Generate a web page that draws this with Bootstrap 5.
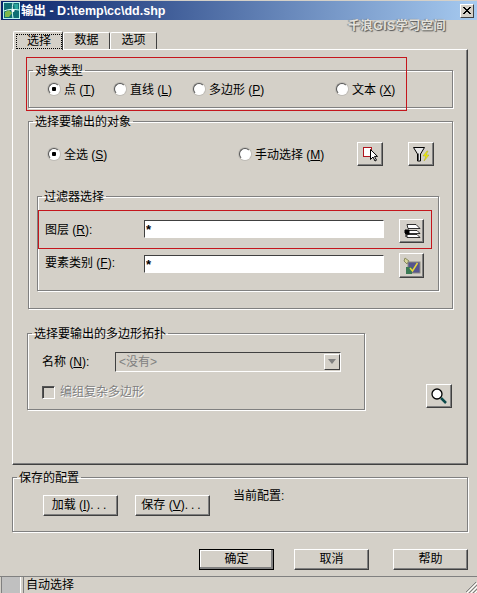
<!DOCTYPE html>
<html lang="zh-CN">

<head>
    <meta charset="UTF-8">
    <meta name="viewport" content="width=device-width, initial-scale=1.0">
    <title>输出</title>
    <link href="https://cdn.jsdelivr.net/npm/bootstrap@5.3.0/dist/css/bootstrap.min.css" rel="stylesheet">
    <style>
        body {
            margin: 0;
            background: #d4d0c8;
            color: #000;
            font-family: "Liberation Sans", "Noto Sans CJK SC", sans-serif;
            font-size: 12px;
            line-height: 14px;
        }

        .dlg-win {
            width: 477px;
            height: 593px;
            overflow: hidden;
            background: #d4d0c8;
        }

        /* title bar */
        .title-strip {
            height: 19px;
            margin: 1px 0 11px 1px;
            padding: 0 2px;
            background: linear-gradient(90deg, #0a246a, #a6caf0);
            color: #fff;
            font-size: 12.5px;
            font-weight: 700;
        }

        .title-ico {
            margin-right: 1px;
        }

        .close-box {
            width: 14px;
            height: 14px;
            background: #d4d0c8;
            border: 1px solid;
            border-color: #fff #404040 #404040 #fff;
            margin-right: 1px;
        }

        .water-mark {
            position: absolute;
            left: 348px;
            top: 19px;
            color: #e4e2dc;
            font-weight: 700;
            letter-spacing: .6px;
            text-shadow: 1px 1px 1px #555, -1px 0 1px #777;
        }

        /* tabs */
        .tab-row {
            margin-left: 13px;
            height: 18px;
            position: relative;
            z-index: 2;
        }

        .tab-item {
            height: 17px;
            margin-top: 1px;
            width: 47px;
            border: 1px solid;
            border-color: #fff #404040 transparent #fff;
            border-bottom: 0;
            border-radius: 2px 2px 0 0;
            color: #000;
            text-decoration: none;
            text-align: center;
            line-height: 15px;
        }

        .tab-item.on {
            width: 50px;
            height: 19px;
            margin-top: 0;
            background: #d4d0c8;
            padding: 2px 0 0 2px;
        }

        .tab-item.on span {
            display: block;
            width: 46px;
            height: 15px;
            border: 1px dotted #000;
            line-height: 13px;
        }

        .tab-panel {
            width: 456px;
            height: 416px;
            margin-left: 12px;
            padding-top: 13px;
            border: 1px solid;
            border-color: #fff #404040 #404040 #fff;
            box-shadow: inset -1px -1px 0 #808080;
        }

        /* etched group box */
        .etch-group {
            border: 1px solid #808080;
            box-shadow: 1px 1px 0 #fff, inset 1px 1px 0 #fff;
            margin: 0;
            padding: 0;
            min-width: 0;
        }

        .etch-group legend {
            float: none;
            width: auto;
            height: 14px;
            margin: 0 0 0 4px;
            padding: 1px 2px 0;
            font-size: 12px;
            line-height: 14px;
        }

        .grp-type {
            width: 425px;
            height: 45px;
            margin: 0 0 6px 15px;
        }

        .body-type {
            height: 22px;
            margin-top: 1px;
            padding-left: 19px;
        }

        .grp-out {
            width: 425px;
            height: 195px;
            margin: 0 0 17px 15px;
        }

        .body-out {
            height: 24px;
            margin-top: 14px;
            padding-left: 19px;
        }

        .grp-filter {
            width: 402px;
            height: 102px;
            margin: 23px 0 0 8px;
        }

        .body-filter {
            padding: 16px 0 0 7px;
        }

        .grp-topo {
            width: 338px;
            height: 84px;
        }

        .body-topo {
            padding: 12px 0 0 14px;
        }

        .grp-saved {
            width: 456px;
            height: 62px;
            margin: 5px 0 17px 12px;
        }

        .body-saved {
            padding: 11px 0 0 30px;
            gap: 17px;
        }

        .slot-a { width: 66px; }
        .slot-b { width: 79px; }
        .slot-c { width: 143px; }
        .slot-d { width: 191px; }
        .slot-e { width: 118px; }

        .opt-label {
            display: inline-flex;
            align-items: center;
            gap: 4px;
            margin: 0;
            white-space: nowrap;
        }

        .opt-label span {
            padding-top: 2px;
        }

        /* sunken radio */
        .win-radio {
            appearance: none;
            width: 12px;
            height: 12px;
            margin: 0;
            border: 1px solid;
            border-color: #555 #fff #fff #555;
            border-radius: 50%;
            background: #fff;
            box-shadow: 0 0 0 1px rgba(128, 128, 128, .25);
        }

        .win-radio:checked {
            background: radial-gradient(circle, #000 0 2px, #fff 2.5px);
        }

        .win-check {
            appearance: none;
            width: 13px;
            height: 13px;
            margin: 0;
            background: #d4d0c8;
            border: 1px solid;
            border-color: #555 #fff #fff #555;
            box-shadow: inset 1px 1px 0 #404040;
        }

        .muted-text {
            color: #808080;
            text-shadow: 1px 1px 0 #fff;
        }

        /* classic raised button */
        .win-btn {
            width: 75px;
            height: 21px;
            padding: 0;
            border-radius: 0;
            font-size: 12px;
            line-height: 17px;
            color: #000;
            background: #d4d0c8;
            border: 1px solid;
            border-color: #fff #404040 #404040 #fff;
            box-shadow: inset -1px -1px 0 #808080;
        }

        .win-btn.dflt {
            outline: 1px solid #000;
            outline-offset: -1px;
            box-shadow: inset -2px -2px 0 #808080, inset 1px 1px 0 #fff;
        }

        .dots {
            letter-spacing: 3px;
        }

        .ico-btn {
            width: 26px;
            height: 24px;
            padding: 0;
        }

        .ico-btn svg {
            display: block;
            margin: auto;
        }

        .second-ico {
            margin-left: 25px;
        }

        .rows-a { height: 34px; }
        .rows-b { height: 25px; }
        .field-name { width: 99px; line-height: 18px; }
        .rows-a .field-name { margin-top: 2px; }
        .rows-b .field-name { margin-top: 1px; }

        .win-entry {
            width: 240px;
            height: 18px;
            padding: 0 1px;
            margin: 1px 15px 0 0;
            background: #fff;
            border: 1px solid;
            border-color: #404040 #fff #fff #404040;
            border-radius: 0;
            outline: 0;
            font-size: 13px;
            font-weight: 700;
            font-family: "Liberation Sans", sans-serif;
        }

        .rows-b .win-entry { margin-top: 2px; }

        .rows-b .ico-btn {
            width: 25px;
            height: 25px;
        }

        .rows-a .ico-btn { width: 25px; }

        .combo-name { width: 73px; line-height: 20px; }

        .win-combo {
            width: 226px;
            height: 20px;
            padding-left: 3px;
            color: #808080;
            border: 1px solid;
            border-color: #404040 #fff #fff #404040;
            line-height: 18px;
        }

        .combo-arrow {
            width: 16px;
            height: 16px;
            background: #d4d0c8;
            border: 1px solid;
            border-color: #fff #404040 #404040 #fff;
            margin: 1px 0 0 0;
        }

        .combo-arrow::after {
            content: "";
            display: block;
            width: 0;
            margin: 4px auto 0;
            border: 4px solid transparent;
            border-top: 5px solid #808080;
            border-bottom: 0;
        }

        .check-row {
            margin-top: 13px;
            gap: 5px;
        }

        .mag-holder {
            width: 425px;
            margin-left: 14px;
        }

        .mag-holder .ico-btn {
            margin-bottom: 2px;
        }

        .saved-note {
            margin: -6px 0 0 6px;
        }

        .bottom-btns {
            margin-left: 199px;
            height: 21px;
            gap: 20px;
        }

        .bottom-btns .last-btn {
            margin-left: 4px;
        }

        /* status bar */
        .status-strip {
            margin-top: 6px;
            height: 17px;
            border-top: 1px solid #808080;
            padding-left: 1px;
            position: relative;
        }

        .status-cell {
            width: 20px;
            background: #c0c0c0;
            border-left: 1px solid #808080;
            border-right: 1px solid #fff;
            margin-right: 2px;
        }

        .status-text {
            border-left: 1px solid #808080;
            padding-left: 2px;
            line-height: 16px;
        }

        .size-grip {
            position: absolute;
            right: 0;
            bottom: 0;
        }

        /* red marks drawn over the dialog */
        .red-mark {
            position: absolute;
            border: 1px solid #c4161c;
            z-index: 3;
            pointer-events: none;
        }

        .mark-a { left: 26px; top: 57px; width: 381px; height: 54px; }
        .mark-b { left: 38px; top: 210px; width: 394px; height: 39px; }
    </style>
</head>

<body>
    <div class="dlg-win position-relative d-flex flex-column">
        <div class="title-strip d-flex align-items-center">
            <svg width="17" height="17" viewBox="0 0 17 17" class="title-ico flex-shrink-0">
                <rect x=".5" y=".5" width="16" height="16" fill="#0f6f74" stroke="#b8f4ee"/>
                <path d="M2 15V10l4-2 3 3-3 4z" fill="#7fb84a"/>
                <path d="M11 2h4v5l-3 1z" fill="#2aa8a0"/>
                <path d="M1 9c4-2 10-2 15-1M10 1c-1 4-1 10 0 15" stroke="#d8fff8" fill="none"/>
                <circle cx="10" cy="8.500" r="1.500" fill="#fff"/>
            </svg>
            <span>输出 - D:\temp\cc\dd.shp</span>
            <span class="close-box d-flex align-items-center justify-content-center ms-auto">
                <svg width="8" height="7" viewBox="0 0 8 7"><path d="M0 0l7 7M1 0l7 7M7 0L0 7M8 0L1 7" stroke="#000" fill="none"/></svg>
            </span>
        </div>
        <div class="water-mark">千浪GIS学习空间</div>

        <ul class="nav tab-row">
            <li><a class="tab-item on d-block" href="#"><span>选择</span></a></li>
            <li><a class="tab-item d-block" href="#">数据</a></li>
            <li><a class="tab-item d-block" href="#">选项</a></li>
        </ul>

        <div class="tab-panel">
            <fieldset class="etch-group grp-type">
                <legend>对象类型</legend>
                <div class="body-type d-flex align-items-center">
                    <div class="slot-a"><label class="opt-label"><input type="radio" class="win-radio" name="otype" checked><span>点 (<u>T</u>)</span></label></div>
                    <div class="slot-b"><label class="opt-label"><input type="radio" class="win-radio" name="otype"><span>直线 (<u>L</u>)</span></label></div>
                    <div class="slot-c"><label class="opt-label"><input type="radio" class="win-radio" name="otype"><span>多边形 (<u>P</u>)</span></label></div>
                    <div><label class="opt-label"><input type="radio" class="win-radio" name="otype"><span>文本 (<u>X</u>)</span></label></div>
                </div>
            </fieldset>

            <fieldset class="etch-group grp-out">
                <legend>选择要输出的对象</legend>
                <div class="body-out d-flex align-items-center">
                    <div class="slot-d"><label class="opt-label"><input type="radio" class="win-radio" name="pick" checked><span>全选 (<u>S</u>)</span></label></div>
                    <div class="slot-e"><label class="opt-label"><input type="radio" class="win-radio" name="pick"><span>手动选择 (<u>M</u>)</span></label></div>
                    <button class="btn win-btn ico-btn" type="button">
                        <svg width="20" height="20" viewBox="0 0 20 20">
                            <rect x="3.500" y="3.500" width="8" height="9" fill="#fff" stroke="#b0141c"/>
                            <path d="M10.500 5.500v10l2.500-2.500 2 4 1.500-.8-2-3.800h3z" fill="#fff" stroke="#000"/>
                        </svg>
                    </button>
                    <button class="btn win-btn ico-btn second-ico" type="button">
                        <svg width="20" height="20" viewBox="0 0 20 20">
                            <path d="M2.500 3.500h11L9.500 10v7h-3v-7z" fill="#e8e8e8" stroke="#000"/>
                            <path d="M7 10v7h1V9z" fill="#555"/>
                            <path d="M16 7l-4 5h3l-2 5 5-6h-3l2-4z" fill="#f4f000" stroke="#a8a820" stroke-width=".5"/>
                        </svg>
                    </button>
                </div>
                <fieldset class="etch-group grp-filter">
                    <legend>过滤器选择</legend>
                    <div class="body-filter">
                        <div class="rows-a d-flex align-items-start">
                            <span class="field-name">图层 (<u>R</u>):</span>
                            <input class="win-entry" type="text" value="*">
                            <button class="btn win-btn ico-btn" type="button">
                                <svg width="20" height="18" viewBox="0 0 20 18">
                                    <path d="M5 2.500h9l4 4H6zM5 8.500h10l3 3H6zM5 12.500h10l3 3H5z" fill="#fff" stroke="#000" stroke-width=".8"/>
                                    <path d="M3 8h4v4H4l-1-1zM4 12v3" stroke="#000" fill="#000"/>
                                </svg>
                            </button>
                        </div>
                        <div class="rows-b d-flex align-items-start">
                            <span class="field-name">要素类别 (<u>F</u>):</span>
                            <input class="win-entry" type="text" value="*">
                            <button class="btn win-btn ico-btn" type="button">
                                <svg width="20" height="20" viewBox="0 0 20 20">
                                    <path d="M3 2l4 3-2 3-3-3z" fill="#d8d89c" stroke="#8a8a60"/>
                                    <rect x="6" y="6" width="12" height="11" fill="#55558f" stroke="#8c8a80"/>
                                    <rect x="4" y="11" width="6" height="7" fill="#3b7a55"/>
                                    <path d="M8 12l2.500 3 5-8" stroke="#e8d83c" stroke-width="1.500" fill="none"/>
                                </svg>
                            </button>
                        </div>
                    </div>
                </fieldset>
            </fieldset>

            <div class="mag-holder d-flex align-items-end justify-content-between">
                <fieldset class="etch-group grp-topo">
                    <legend>选择要输出的多边形拓扑</legend>
                    <div class="body-topo">
                        <div class="d-flex">
                            <span class="combo-name">名称 (<u>N</u>):</span>
                            <div class="win-combo d-flex justify-content-between">
                                <span>&lt;没有&gt;</span>
                                <span class="combo-arrow"></span>
                            </div>
                        </div>
                        <div class="check-row d-flex align-items-center">
                            <input type="checkbox" class="win-check" disabled>
                            <span class="muted-text">编组复杂多边形</span>
                        </div>
                    </div>
                </fieldset>
                <button class="btn win-btn ico-btn" type="button">
                    <svg width="20" height="20" viewBox="0 0 20 20">
                        <circle cx="8" cy="8" r="5" fill="#fff" stroke="#000" stroke-width="1.300"/>
                        <path d="M12 12l5 5" stroke="#0b4a4a" stroke-width="2.500"/>
                    </svg>
                </button>
            </div>
        </div>

        <fieldset class="etch-group grp-saved">
            <legend>保存的配置</legend>
            <div class="body-saved d-flex align-items-start">
                <button class="btn win-btn" type="button">加载 (<u>I</u>)<span class="dots">...</span></button>
                <button class="btn win-btn" type="button">保存 (<u>V</u>)<span class="dots">...</span></button>
                <span class="saved-note">当前配置:</span>
            </div>
        </fieldset>

        <div class="bottom-btns d-flex">
            <button class="btn win-btn dflt" type="button">确定</button>
            <button class="btn win-btn" type="button">取消</button>
            <button class="btn win-btn last-btn" type="button">帮助</button>
        </div>

        <div class="status-strip d-flex">
            <div class="status-cell"></div>
            <div class="status-text flex-grow-1">自动选择</div>
            <svg class="size-grip" width="12" height="12" viewBox="0 0 12 12">
                <path d="M11 1L1 11M12 4l-8 8M12 8l-4 4" stroke="#808080" fill="none"/>
                <path d="M12 2L2 12M12 6l-6 6M12 10l-2 2" stroke="#fff" fill="none"/>
            </svg>
        </div>

        <div class="red-mark mark-a"></div>
        <div class="red-mark mark-b"></div>
    </div>
    <script src="https://cdn.jsdelivr.net/npm/bootstrap@5.3.0/dist/js/bootstrap.bundle.min.js"></script>
</body>

</html>
